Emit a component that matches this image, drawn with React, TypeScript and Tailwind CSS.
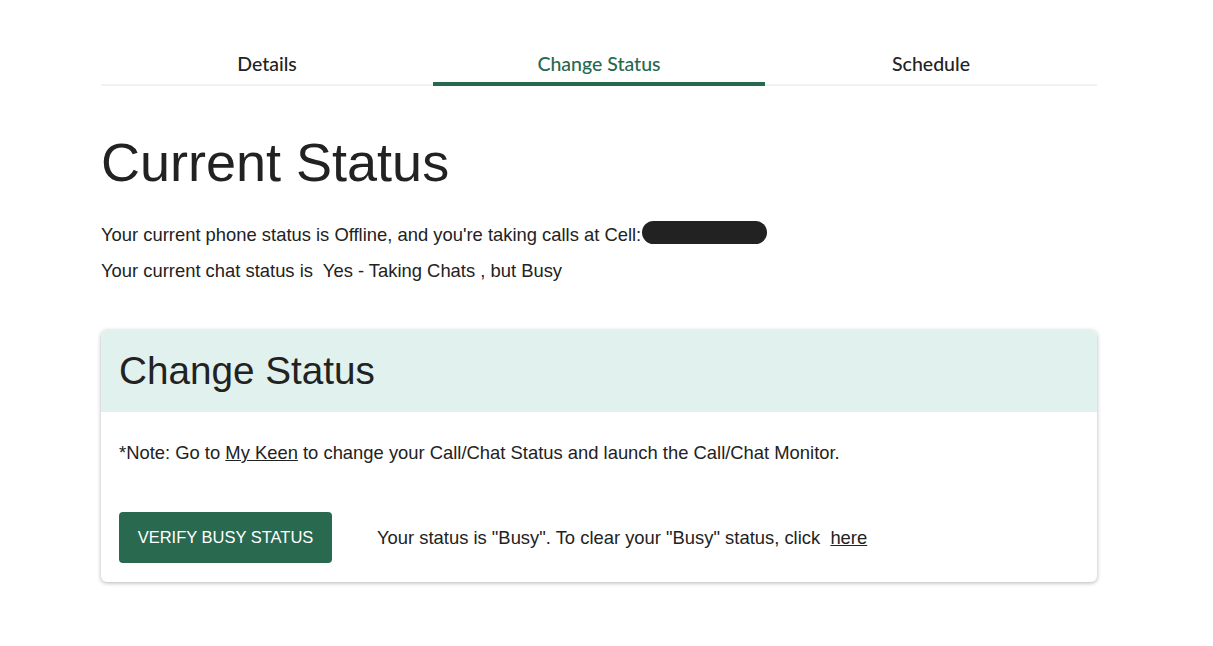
import React from 'react';

const tabs = ['Details', 'Change Status', 'Schedule'];

const App: React.FC = () => {
  const active = 'Change Status';

  return (
    <div className="min-h-screen bg-white font-['Liberation_Sans',Arial,sans-serif] text-[#222222]">
      <div className="ml-[101px] w-[996px] pt-[42px]">
        {/* tabs */}
        <div className="flex border-b-2 border-[#f1f1f1]">
          {tabs.map((t) => (
            <div
              key={t}
              className={`relative flex h-[42px] flex-1 items-center justify-center pt-[2px] font-['Lato',sans-serif] text-[19.5px] font-medium ${
                t === active ? 'text-[#27694f]' : 'text-[#222222]'
              }`}
            >
              {t}
              {t === active && (
                <span className="absolute -bottom-[2px] left-0 right-0 h-[4px] bg-[#27694f]" />
              )}
            </div>
          ))}
        </div>

        <h1 className="mt-[46px] text-[54px] leading-[60px] font-normal">Current Status</h1>

        <p className="mt-[31px] flex h-[24px] items-center text-[18.4px] leading-[24px]">
          Your current phone status is Offline, and you're taking calls at Cell:
          <span className="-mt-[6px] ml-[1px] inline-block h-[23px] w-[125px] rounded-full bg-[#222222]" />
        </p>
        <p className="mt-[12px] text-[18.4px] leading-[24px] whitespace-pre">
          Your current chat status is  Yes - Taking Chats , but Busy
        </p>

        {/* card */}
        <div className="mt-[47px] overflow-hidden rounded-[6px] bg-white shadow-[0_1px_4px_rgba(0,0,0,0.3)]">
          <div className="flex h-[82px] items-center bg-[#e1f1ed] px-[18px]">
            <h2 className="text-[38.7px] leading-[44px] font-normal">Change Status</h2>
          </div>
          <div className="px-[18px] pt-[29px] pb-[19px]">
            <p className="text-[18.4px] leading-[24px]">
              *Note: Go to <a className="underline">My Keen</a> to change your Call/Chat Status and launch the Call/Chat Monitor.
            </p>
            <div className="mt-[47px] flex items-center">
              <button className="h-[51px] w-[213px] rounded-[4px] bg-[#29694f] text-[16.5px] uppercase text-white">
                Verify Busy Status
              </button>
              <p className="ml-[45px] text-[18.4px] leading-[24px] whitespace-pre">
                Your status is "Busy". To clear your "Busy" status, click  <a className="underline">here</a>
              </p>
            </div>
          </div>
        </div>
      </div>
    </div>
  );
};

export default App;
